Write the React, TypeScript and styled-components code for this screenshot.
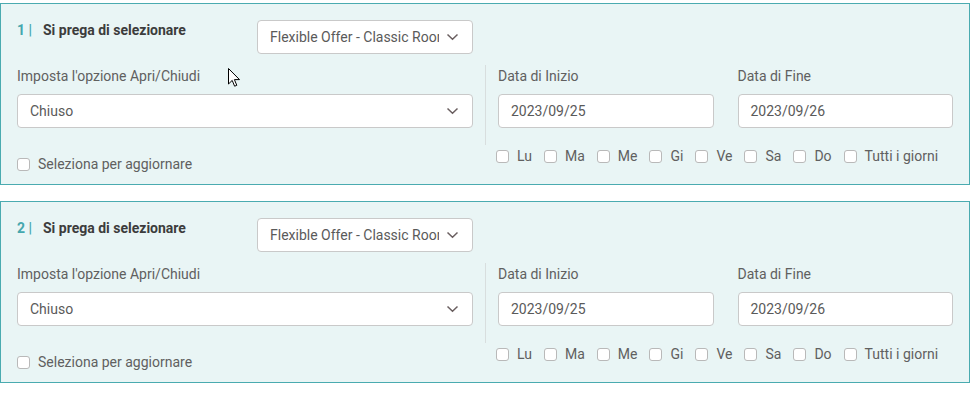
import React from "react";
import styled, { createGlobalStyle } from "styled-components";

const GlobalStyle = createGlobalStyle`
  html, body { margin: 0; padding: 0; background: #ffffff; }
  body { font-family: Roboto, "Liberation Sans", Arial, sans-serif; font-size: 14px; color: #555; }
  * { box-sizing: border-box; }
`;

const Page = styled.div`
  position: relative;
  padding-top: 3px;
  width: 973px;
`;

const Card = styled.section`
  width: 970px;
  border: 1px solid #4aabb0;
  background: #e9f5f5;
  padding: 16px 16px 10px 16px;
  & + & { margin-top: 16px; }
`;

const Header = styled.div`
  display: flex;
  align-items: flex-start;
`;

const Title = styled.div`
  width: 240px;
  line-height: 20px;
  font-weight: 700;
  font-size: 14px;
  color: #3c3c3c;
  display: flex;
`;

const Step = styled.span`
  color: #45a7ae;
  width: 26px;
`;

const SelectBox = styled.div<{ $width?: string }>`
  position: relative;
  width: ${(p) => p.$width || "100%"};
  height: 34px;
  background: #fff;
  border: 1px solid #c9c9c9;
  border-radius: 4px;
  padding: 0 33px 0 12px;
  display: flex;
  align-items: center;
  font-size: 14px;
  color: #5a5a5a;
  overflow: hidden;
`;

const SelectText = styled.span`
  white-space: nowrap;
  overflow: hidden;
  text-overflow: clip;
  flex: 1;
`;

const Chevron = styled.svg`
  position: absolute;
  right: 13px;
  top: 50%;
  margin-top: -4px;
`;

const Body = styled.div`
  margin-top: 11px;
  display: grid;
  grid-template-columns: 456px minmax(0, 1fr);
  column-gap: 12px;
`;

const LeftCol = styled.div`
  padding-top: 1px;
  display: flex;
  flex-direction: column;
`;

const Label = styled.div`
  line-height: 20px;
  margin-bottom: 8px;
  color: #606060;
  font-size: 14px;
`;

const RightCol = styled.div`
  display: flex;
  flex-direction: column;
  min-width: 0;
`;

const DateBlock = styled.div`
  border-left: 1px solid #d8dede;
  padding: 1px 0 17px 12px;
  display: grid;
  grid-template-columns: minmax(0, 1fr) minmax(0, 1fr);
  column-gap: 24px;
`;

const Field = styled.div`
  display: flex;
  flex-direction: column;
`;

const Input = styled.div`
  height: 34px;
  background: #fff;
  border: 1px solid #c9c9c9;
  border-radius: 4px;
  padding: 0 12px;
  display: flex;
  align-items: center;
  color: #5a5a5a;
  font-size: 14px;
`;

const CheckRow = styled.label<{ $mt?: number }>`
  display: flex;
  align-items: center;
  line-height: 20px;
  margin-top: ${(p) => p.$mt || 0}px;
  color: #606060;
  font-size: 14px;
  white-space: nowrap;
`;

const Box = styled.span`
  width: 13px;
  height: 13px;
  border: 1px solid #b9b9b9;
  border-radius: 3px;
  background: #fff;
  margin-right: 8px;
  flex: none;
`;

const DaysRow = styled.div`
  display: flex;
  align-items: center;
  gap: 12px;
  line-height: 20px;
  padding: 1px 0 0 11px;
`;

const Day = styled.label`
  display: flex;
  flex: none;
  align-items: center;
  color: #606060;
  font-size: 14px;
  white-space: nowrap;
`;

const Cursor = styled.svg`
  position: absolute;
  left: 228px;
  top: 68px;
  pointer-events: none;
`;

const ChevronIcon = () => (
  <Chevron width="13" height="8" viewBox="0 0 13 8">
    <path d="M1.5 1.5 L6.5 6.3 L11.5 1.5" fill="none" stroke="#6a5f60" strokeWidth="1.5" />
  </Chevron>
);

const days = ["Lu", "Ma", "Me", "Gi", "Ve", "Sa", "Do", "Tutti i giorni"];

const Section = ({ n }: { n: number }) => (
  <Card>
    <Header>
      <Title>
        <Step>{n}&nbsp;|</Step>
        <span>Si prega di selezionare</span>
      </Title>
      <SelectBox $width="216px">
        <SelectText>Flexible Offer - Classic Room</SelectText>
        <ChevronIcon />
      </SelectBox>
    </Header>
    <Body>
      <LeftCol>
        <Label>Imposta l'opzione Apri/Chiudi</Label>
        <SelectBox>
          <SelectText>Chiuso</SelectText>
          <ChevronIcon />
        </SelectBox>
        <CheckRow $mt={26}>
          <Box />
          Seleziona per aggiornare
        </CheckRow>
      </LeftCol>
      <RightCol>
        <DateBlock>
          <Field>
            <Label>Data di Inizio</Label>
            <Input>2023/09/25</Input>
          </Field>
          <Field>
            <Label>Data di Fine</Label>
            <Input>2023/09/26</Input>
          </Field>
        </DateBlock>
        <DaysRow>
          {days.map((d) => (
            <Day key={d}>
              <Box />
              {d}
            </Day>
          ))}
        </DaysRow>
      </RightCol>
    </Body>
  </Card>
);

export default function App() {
  return (
    <>
      <GlobalStyle />
      <Page>
        <Section n={1} />
        <Section n={2} />
        <Cursor width="13" height="20" viewBox="0 0 13 20">
          <path
            d="M0.5 0.5 L0.5 16 L4.2 12.4 L6.6 18.2 L8.8 17.3 L6.4 11.6 L11.5 11.6 Z"
            fill="#fff"
            stroke="#000"
            strokeWidth="1"
            strokeLinejoin="miter"
          />
        </Cursor>
      </Page>
    </>
  );
}
